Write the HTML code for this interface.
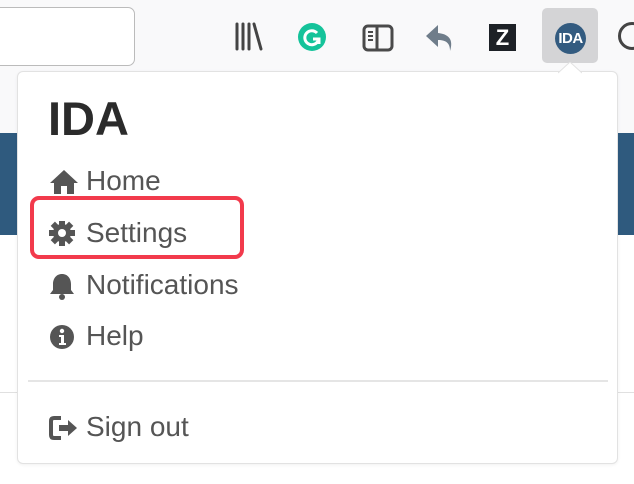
<!DOCTYPE html><html><head><style>
body{margin:0;width:634px;height:484px;overflow:hidden;background:#fff;position:relative;font-family:"Liberation Sans",sans-serif}
.a{position:absolute}
.item{position:absolute;left:49px;font-size:28px;color:#555;line-height:30px}
.item svg{position:absolute;left:0;top:3px}
.item span{position:absolute;left:37px;white-space:nowrap}
</style></head><body>
<div class="a" style="left:0;top:0;width:634px;height:133px;background:#f9f9fa"></div>
<div class="a" style="left:0;top:133px;width:634px;height:102px;background:#2f5a7e"></div>
<div class="a" style="left:0;top:392px;width:634px;height:1px;background:#e0e0e0"></div>
<div class="a" style="left:-10px;top:7px;width:143px;height:57px;border:1px solid #bbb;border-radius:7px;background:#fff"></div>
<svg class="a" style="left:234px;top:22px" width="30" height="30"><g stroke="#444" stroke-width="3" stroke-linecap="round"><line x1="3" y1="2" x2="3" y2="27"/><line x1="9" y1="2" x2="9" y2="27"/><line x1="15" y1="2" x2="15" y2="27"/><line x1="20" y1="2" x2="27" y2="27"/></g></svg>
<div class="a" style="left:298px;top:23px;width:28px;height:28px;border-radius:50%;background:#15c39a"></div>
<svg class="a" style="left:298px;top:23px" width="28" height="28"><path d="M19 10a7 7 0 1 0 1 8" fill="none" stroke="#fff" stroke-width="3"/><path d="M15 16h6v5" fill="none" stroke="#fff" stroke-width="3"/></svg>
<svg class="a" style="left:362px;top:23px" width="32" height="30"><rect x="2" y="3" width="28" height="24" rx="4" fill="none" stroke="#4a4a4a" stroke-width="3"/><line x1="15" y1="3" x2="15" y2="27" stroke="#4a4a4a" stroke-width="3"/><g stroke="#4a4a4a" stroke-width="2"><line x1="6" y1="9" x2="11" y2="9"/><line x1="6" y1="13" x2="11" y2="13"/><line x1="6" y1="17" x2="11" y2="17"/></g></svg>
<svg class="a" style="left:424px;top:23px" width="34" height="30"><path d="M14 2L2 13l12 11v-7c8 0 12 3 12 11 4-12-2-17-12-18z" fill="#6f7d8a"/></svg>
<div class="a" style="left:489px;top:24px;width:27px;height:27px;background:#1d2126;color:#fff;font-weight:bold;font-size:22px;text-align:center;line-height:27px">Z</div>
<div class="a" style="left:542px;top:8px;width:56px;height:55px;background:#d4d4d6;border-radius:5px"></div>
<div class="a" style="left:555px;top:23px;width:31px;height:31px;border-radius:50%;background:#335b80;color:#fff;font-weight:bold;font-size:15px;letter-spacing:-0.5px;text-align:center;line-height:31px">IDA</div>
<div class="a" style="left:618px;top:22px;width:28px;height:28px;border-radius:50%;border:3px solid #444;box-sizing:border-box"></div>
<div class="a" style="left:17px;top:71px;width:601px;height:393px;background:#fff;border:1px solid #e2e2e2;border-radius:6px;box-sizing:border-box;box-shadow:0 1px 3px rgba(0,0,0,.06)"></div>
<svg class="a" style="left:558px;top:62px" width="24" height="12"><path d="M0 11L12 0l12 11z" fill="#fff"/><path d="M0 11L12 0l12 11" fill="none" stroke="#e2e2e2"/></svg>
<div class="a" style="left:48px;top:93px;font-size:47px;font-weight:bold;color:#2b2b2b;line-height:52px">IDA</div>
<div class="item" style="top:166px"><svg width="30" height="26"><path d="M15 1L1 14h4v11h7v-8h6v8h7V14h4z" fill="#555"/></svg><span>Home</span></div>
<div class="a" style="left:30px;top:196px;width:214px;height:63px;border:4px solid #f23a4c;border-radius:9px;box-sizing:border-box"></div>
<div class="item" style="top:218px"><svg width="28" height="26"><g transform="translate(13 12)" fill="#555"><circle r="9"/><g><rect x="-3" y="-13" width="6" height="26"/><rect x="-3" y="-13" width="6" height="26" transform="rotate(45)"/><rect x="-3" y="-13" width="6" height="26" transform="rotate(90)"/><rect x="-3" y="-13" width="6" height="26" transform="rotate(135)"/></g><circle r="4" fill="#fff"/></g></svg><span>Settings</span></div>
<div class="item" style="top:270px"><svg width="28" height="28"><path d="M13 1c-6 0-9 5-9 10v6l-3 4h24l-3-4v-6c0-5-3-10-9-10z" fill="#555"/><circle cx="13" cy="24" r="3" fill="#555"/></svg><span>Notifications</span></div>
<div class="item" style="top:321px"><svg width="28" height="28"><circle cx="13" cy="13" r="12" fill="#555"/><circle cx="13" cy="7" r="2.2" fill="#fff"/><path d="M10 11h5v8h2v2h-7v-2h2v-6h-2z" fill="#fff"/></svg><span>Help</span></div>
<div class="a" style="left:28px;top:380px;width:580px;height:2px;background:#e5e5e5"></div>
<div class="item" style="top:412px"><svg width="32" height="26"><path d="M12 3H5Q2 3 2 6v14q0 3 3 3h7" fill="none" stroke="#555" stroke-width="4"/><path d="M10 10h9V5l9 8-9 8v-5h-9z" fill="#555"/></svg><span>Sign out</span></div>
</body></html>
